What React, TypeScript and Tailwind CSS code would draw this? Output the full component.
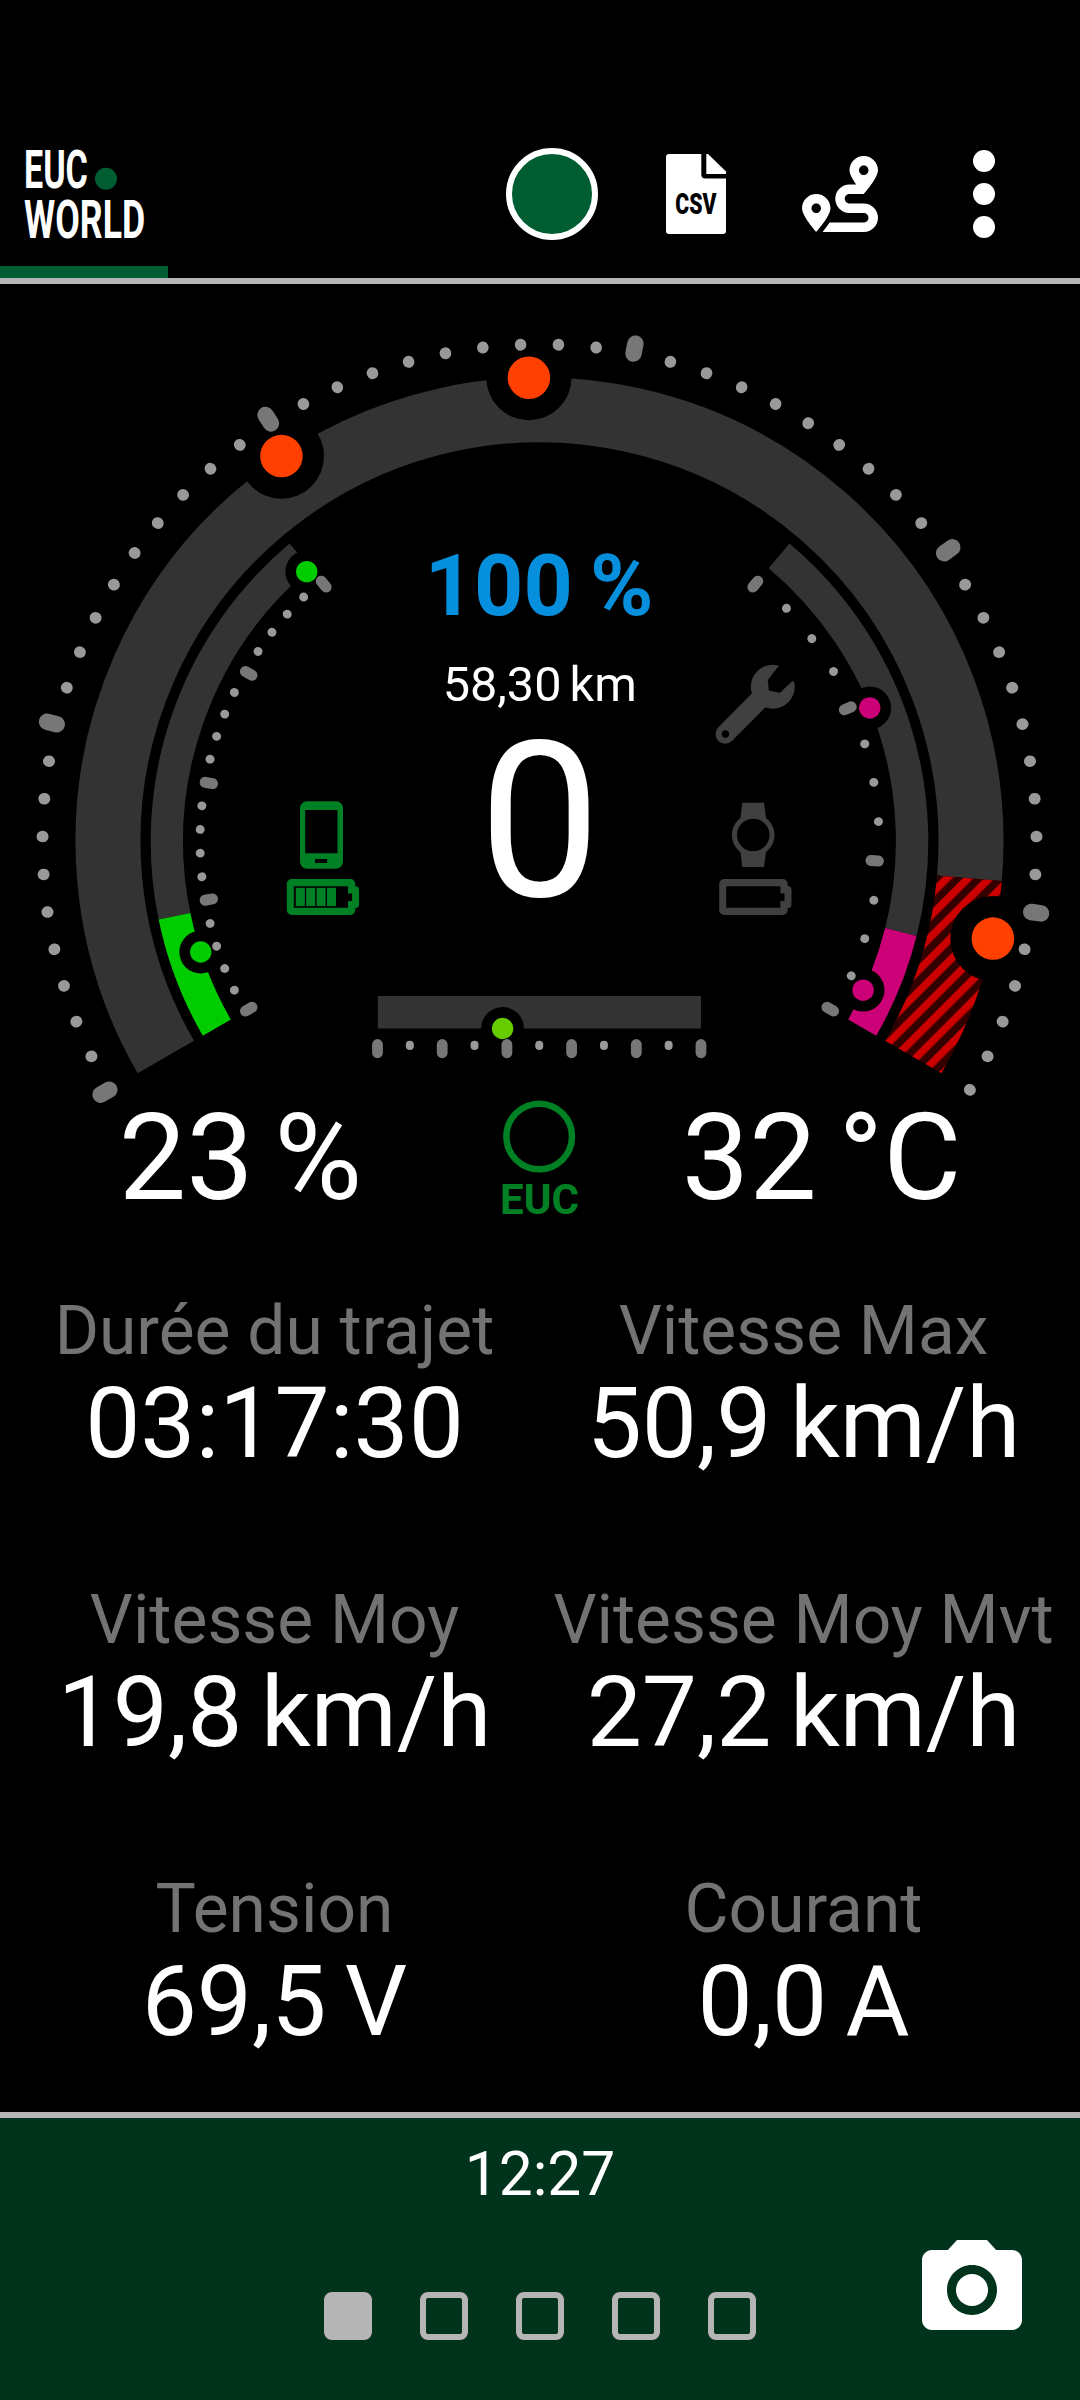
import clsx from "clsx";
import { FaRoute } from "react-icons/fa";
import { MdPhotoCamera } from "react-icons/md";

const CX = 539.5;
const CY = 841.3;

// Angles are in degrees, 0 = east, positive = counter-clockwise.
function polar(r: number, deg: number) {
  const a = (deg * Math.PI) / 180;
  return { x: CX + r * Math.cos(a), y: CY - r * Math.sin(a) };
}

// Clockwise arc from one angle to another.
function arc(r: number, from: number, to: number) {
  const a = polar(r, from);
  const b = polar(r, to);
  const large = from - to > 180 ? 1 : 0;
  return `M${a.x} ${a.y}A${r} ${r} 0 ${large} 1 ${b.x} ${b.y}`;
}

interface TicksProps {
  count: number;
  every: number;
  from: number;
  step: number;
  minor: [number, number, number];
  major: [number, number, number];
}

/** Round-capped radial ticks; minor/major are [inner radius, outer radius, width]. */
function Ticks({ count, every, from, step, minor, major }: TicksProps) {
  return (
    <g strokeLinecap="round">
      {Array.from({ length: count + 1 }, (_, i) => {
        const isMajor = i % every === 0;
        const [r1, r2, w] = isMajor ? major : minor;
        const a = polar(r1 + w / 2, from + i * step);
        const b = polar(r2 - w / 2, from + i * step);
        return (
          <line
            key={i}
            x1={a.x}
            y1={a.y}
            x2={b.x}
            y2={b.y}
            strokeWidth={w}
            stroke={isMajor ? "#777777" : "#999999"}
          />
        );
      })}
    </g>
  );
}

function Marker({ x, y, r, color }: { x: number; y: number; r: number; color: string }) {
  return (
    <>
      <circle cx={x} cy={y} r={r * 2} fill="#000" />
      <circle cx={x} cy={y} r={r} fill={color} />
    </>
  );
}

function BatteryIcon({ x, y, color, bars = 0 }: { x: number; y: number; color: string; bars?: number }) {
  return (
    <g transform={`translate(${x} ${y})`} fill={color}>
      <path
        fillRule="evenodd"
        d="M5 0H63.5a5 5 0 0 1 5 5V7.2h0.5a3.5 3.5 0 0 1 3.3 3.5V25.5a3.5 3.5 0 0 1 -3.3 3.5h-0.5V31a5 5 0 0 1 -5 5H5a5 5 0 0 1 -5 -5V5a5 5 0 0 1 5 -5zM7 7.2V28.8H61.2V22H65.3V14.5H61.2V7.2z"
      />
      {Array.from({ length: bars }, (_, i) => (
        <rect key={i} x={9 + i * 10.4} y={8.8} width={9} height={18.3} />
      ))}
    </g>
  );
}

const SPEED_STEP = 240 / 55;
const speedAngle = (v: number) => 210 - v * SPEED_STEP;

function Gauge() {
  return (
    <svg viewBox="0 284 1080 961" className="block h-[961px] w-full shrink-0 font-[Roboto,sans-serif]">
      <defs>
        <pattern id="hatch" width="15" height="15" patternUnits="userSpaceOnUse" patternTransform="rotate(45) translate(11.9 0)">
          <rect width="15" height="15" fill="#330000" />
          <rect width="7.5" height="15" fill="#cc0000" />
        </pattern>
      </defs>

      {/* Speed */}
      <g fill="none" strokeWidth={65}>
        <path d={arc(431.5, 210, speedAngle(49.25))} stroke="#333333" />
        <path d={arc(431.5, speedAngle(49.25), -30)} stroke="url(#hatch)" />
      </g>
      {[19.75, 27.2, 50.9].map((v) => (
        <Marker key={v} {...polar(463.7, speedAngle(v))} r={21.3} color="#ff4000" />
      ))}
      <Ticks count={55} every={10} from={210} step={-SPEED_STEP} minor={[491, 503, 11.5]} major={[488.5, 515, 16.5]} />

      {/* Battery */}
      <g fill="none" strokeWidth={32.4}>
        <path d={arc(372.6, 191.6, 130)} stroke="#333333" />
        <path d={arc(372.6, 210, 191.6)} stroke="#00cc00" />
      </g>
      <Marker {...polar(356.4, 198.1)} r={10.7} color="#00cc00" />
      <Marker {...polar(356.2, 130.8)} r={10.7} color="#00cc00" />
      <Ticks count={20} every={5} from={210} step={-4} minor={[335, 344, 8.8]} major={[326.5, 345, 11]} />

      {/* Temperature */}
      <g fill="none" strokeWidth={32.4}>
        <path d={arc(372.6, 50, -14.1)} stroke="#333333" />
        <path d={arc(372.6, -14.1, -30)} stroke="#cc0077" />
      </g>
      <Marker {...polar(356.2, 22)} r={10.7} color="#cc0077" />
      <Marker {...polar(356.2, -24.7)} r={10.7} color="#cc0077" />
      <Ticks count={12} every={4} from={-30} step={80 / 12} minor={[335, 344, 8.8]} major={[326.5, 345, 11]} />

      {/* Load bar */}
      <rect x={377.8} y={996} width={323.2} height={32.5} fill="#333333" />
      <Marker x={502.6} y={1028.5} r={10.7} color="#66cc00" />
      <g strokeLinecap="round">
        {Array.from({ length: 11 }, (_, i) => {
          const x = 377.5 + i * 32.35;
          return i % 2 === 0 ? (
            <line key={i} x1={x} x2={x} y1={1044.5} y2={1052.8} strokeWidth={10.8} stroke="#777777" />
          ) : (
            <line key={i} x1={x} x2={x} y1={1044.8} y2={1046} strokeWidth={8} stroke="#999999" />
          );
        })}
      </g>

      {/* Phone */}
      <path
        fill="#008024"
        fillRule="evenodd"
        d="M307 801.3H336a7 7 0 0 1 7 7V861.7a7 7 0 0 1 -7 7H307a7 7 0 0 1 -7 -7V808.3a7 7 0 0 1 7 -7zM305.2 810V853.3H337.5V810zM315 859V863H327.2V859z"
      />
      <BatteryIcon x={286.8} y={879} color="#008024" bars={4} />

      {/* Watch */}
      <g>
        <path d="M742.3 802.7H764L766.3 820H740.2zM740.2 850H766.3L764 867H742.3z" fill="#404040" />
        <circle cx={753.2} cy={835} r={18.8} fill="#000" stroke="#404040" strokeWidth={5} />
      </g>
      <BatteryIcon x={719.2} y={879} color="#404040" />

      {/* Wrench */}
      <g>
        <circle cx={772.8} cy={686.7} r={22} fill="#404040" />
        <path d="M725.3 734L766 693" stroke="#404040" strokeWidth={19.5} strokeLinecap="round" />
        <path d="M779.5 665L767.7 680L768.9 690.7L780 692.7L791 682.3Q794 679.5 795 683.5L803 676V657H781z" fill="#000" />
        <circle cx={725.4} cy={734} r={3.7} fill="#000" />
      </g>

      {/* Wheel link */}
      <circle cx={539.2} cy={1136.5} r={32.8} fill="none" stroke="#008024" strokeWidth={6.5} />
      <text x={500} y={1214.3} textLength={79} lengthAdjust="spacingAndGlyphs" className="fill-[#008024] text-[42.5px] font-bold">
        EUC
      </text>

      <g textAnchor="middle" className="fill-white">
        <text x={539.2} y={615} className="fill-[#058fdc] text-[86px] font-bold [word-spacing:-4px]">
          100 %
        </text>
        <text x={539.7} y={701} className="text-[48.6px] [word-spacing:-4px]">
          58,30 km
        </text>
        <text x={539.8} y={896} className="text-[217px]">
          0
        </text>
        <text x={240.5} y={1198.5} className="text-[120px] [word-spacing:-9px]">
          23 %
        </text>
        <text x={821.5} y={1198.5} className="text-[120px] [word-spacing:-8px]">
          32 °C
        </text>
      </g>
    </svg>
  );
}

function Header() {
  return (
    <header className="flex h-[284px] shrink-0 flex-col border-b-[6px] border-[#b5b5b5] pt-[122px]">
      <div className="flex h-36 items-center">
        <svg viewBox="0 122 168 144" className="h-36 w-[168px] font-[Roboto,sans-serif]">
          <g className="fill-white text-[54.5px] font-bold">
            <text transform="translate(24 188.3) scale(0.625 1)">EUC</text>
            <text transform="translate(24 238.3) scale(0.655 1)">WORLD</text>
          </g>
          <circle cx={106} cy={178.7} r={11} fill="#005c31" />
        </svg>
        <span className="ml-[338px] size-[92px] rounded-full border-[6px] border-white bg-[#005c31]" />
        <svg viewBox="0 0 60 80" className="ml-[68px] h-20 w-[60px] font-[Roboto,sans-serif]">
          <path d="M3 0H35.3V20.5a4 4 0 0 0 4 4H60V77a3 3 0 0 1 -3 3H3a3 3 0 0 1 -3 -3V3a3 3 0 0 1 3 -3z" fill="#fff" />
          <path d="M40.3 0H42L60 17.5V20H40.3z" fill="#fff" />
          <text transform="translate(9.3 59.8) scale(0.73 1)" className="fill-black text-[29px] font-black">
            CSV
          </text>
        </svg>
        <FaRoute className="ml-[76px] size-[76px] text-white" />
        <div className="ml-[95px] flex flex-col gap-[11px]">
          {[0, 1, 2].map((i) => (
            <span key={i} className="size-[22px] rounded-full bg-white" />
          ))}
        </div>
      </div>
      <div className="h-3 w-[168px] bg-[#005c31]" />
    </header>
  );
}

const metrics = [
  { label: "Durée du trajet", value: "03:17:30" },
  { label: "Vitesse Max", value: "50,9 km/h" },
  { label: "Vitesse Moy", value: "19,8 km/h" },
  { label: "Vitesse Moy Mvt", value: "27,2 km/h" },
  { label: "Tension", value: "69,5 V" },
  { label: "Courant", value: "0,0 A" },
];

export default function App() {
  return (
    <div className="flex h-[2400px] w-[1080px] flex-col overflow-hidden bg-black font-[Roboto,sans-serif] text-white">
      <Header />
      <Gauge />

      <section className="grid shrink-0 grid-cols-2 pr-3 pl-[10px]">
        {metrics.map((m) => (
          <div key={m.label} className="flex h-[289px] flex-col items-center pt-[47px] whitespace-nowrap">
            <span className="text-[67.7px] leading-[78px] text-[#737373]">{m.label}</span>
            <span className="text-[98.2px] leading-[108px] [word-spacing:-6px]">{m.value}</span>
          </div>
        ))}
      </section>

      <footer className="flex flex-1 flex-col border-t-[6px] border-[#b5b5b5] bg-[#00331c]">
        <span className="mt-[21px] text-center text-[60.5px] leading-[72px]">12:27</span>
        <div className="mt-[19px] flex items-start">
          <div className="mt-[62px] ml-[324px] flex gap-12">
            {[0, 1, 2, 3, 4].map((i) => (
              <span
                key={i}
                className={clsx("size-12 rounded-lg border-[6px] border-[#b5b5b5]", i === 0 && "bg-[#b5b5b5]")}
              />
            ))}
          </div>
          <MdPhotoCamera className="ml-[156px] size-[120px] text-white" />
        </div>
      </footer>
    </div>
  );
}
